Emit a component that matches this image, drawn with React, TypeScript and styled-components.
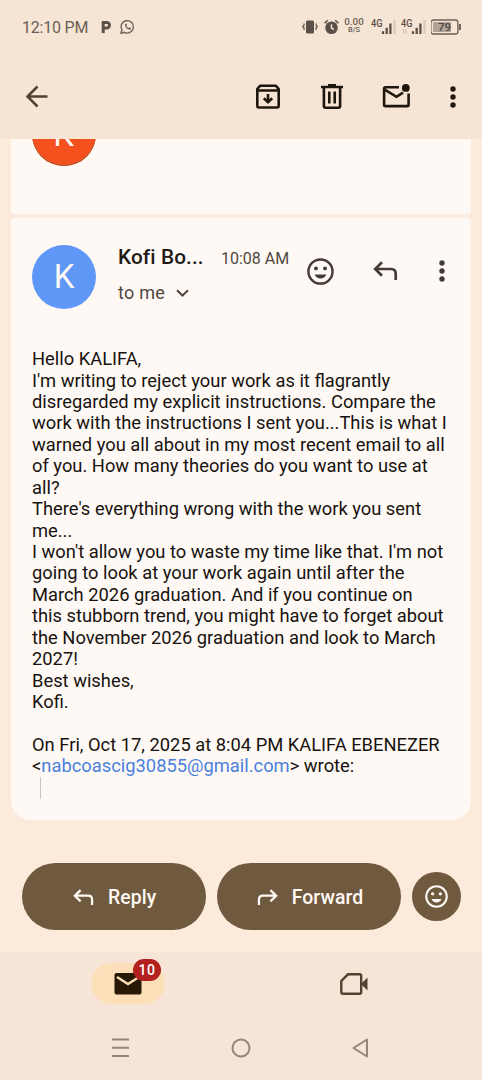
import React from "react";
import styled, { createGlobalStyle } from "styled-components";

const GlobalStyle = createGlobalStyle`
  * { box-sizing: border-box; }
  body { margin: 0; background: #fceada; font-family: Roboto, "Liberation Sans", sans-serif; }
  svg { display: block; flex: none; }
`;

const Screen = styled.div`
  width: 482px;
  height: 1080px;
  display: flex;
  flex-direction: column;
  overflow: hidden;
  background: #fceada;
`;

const StatusBar = styled.header`
  height: 54px;
  padding: 0 20px 0 22px;
  display: flex;
  align-items: center;
  background: #f6e5d5;
  color: #6b5f55;
`;

const Clock = styled.span`
  font-size: 16px;
  line-height: 20px;
  letter-spacing: -0.2px;
  width: 79px;
  padding-top: 1px;
  white-space: nowrap;
`;

const StatusIcons = styled.div`
  margin-left: auto;
  display: flex;
  align-items: center;
`;

const NetSpeed = styled.div`
  width: 20px;
  margin: 0 7px 3px 3px;
  display: flex;
  flex-direction: column;
  align-items: center;
  font-size: 9.8px;
  line-height: 9px;
  font-weight: 500;
  white-space: nowrap;
`;

const SpeedUnit = styled.span`
  font-size: 7.5px;
  line-height: 8px;
`;

const Toolbar = styled.nav`
  height: 85px;
  padding: 0 13.5px 0 21px;
  display: flex;
  align-items: center;
  background: #f6e5d5;
`;

const ToolbarActions = styled.div`
  margin-left: auto;
  display: flex;
  gap: 32px;
`;

const IconButton = styled.button<{ $color?: string }>`
  width: 32px;
  height: 32px;
  padding: 0;
  border: 0;
  background: none;
  color: ${(p) => p.$color ?? "#1f170d"};
  display: flex;
  align-items: center;
  justify-content: center;
`;

const OverflowButton = styled(IconButton)`
  margin-left: 24.5px;
`;

const ReplyIconButton = styled(IconButton)`
  margin-left: 33px;
`;

const Thread = styled.main`
  height: 681px;
  padding: 0 11px;
  display: flex;
  flex-direction: column;
  gap: 4px;
`;

const CollapsedCard = styled.section`
  height: 75px;
  padding-left: 21px;
  background: #fff9f5;
  border-radius: 0 0 4px 4px;
  box-shadow: 0 4px 0 #fbebe3;
  overflow: hidden;
`;

const MessageCard = styled.section`
  height: 602px;
  padding: 26.5px 13px 0 21px;
  background: #fff9f5;
  border-radius: 4px 4px 20px 20px;
`;

const Avatar = styled.div<{ $color: string; $lift?: number }>`
  width: 64px;
  height: 64px;
  margin-top: ${(p) => -(p.$lift ?? 0)}px;
  border-radius: 50%;
  background: ${(p) => p.$color};
  color: #fff9f5;
  display: flex;
  align-items: center;
  justify-content: center;
  font-size: 33px;
  flex: none;
`;

const RingedAvatar = styled(Avatar)`
  box-shadow: inset 0 -1px 0 #a8532f;
  padding-right: 1px;
`;

const MessageHeader = styled.div`
  height: 64px;
  display: flex;
`;

const SenderBlock = styled.div`
  width: 187.5px;
  margin-left: 22px;
`;

const SenderLine = styled.div`
  height: 25px;
  display: flex;
  align-items: baseline;
  white-space: nowrap;
`;

const Sender = styled.span`
  width: 103px;
  font-size: 20.8px;
  line-height: 25px;
  font-weight: 500;
  letter-spacing: 0.1px;
  color: #211a14;
`;

const Time = styled.span`
  font-size: 16px;
  color: #51473f;
`;

const Recipient = styled.div`
  height: 24px;
  margin-top: 11px;
  display: flex;
  align-items: center;
  gap: 11px;
  font-size: 18px;
  letter-spacing: 0.25px;
  color: #51473f;
`;

const MessageActions = styled.div`
  height: 53px;
  display: flex;
  align-items: center;
`;

const MessageBody = styled.div`
  margin-top: 39.6px;
  font-size: 18.33px;
  line-height: 21.45px;
  color: #17130f;
`;

const Line = styled.div`
  height: 21.45px;
  white-space: nowrap;
`;

const MailLink = styled.a`
  color: #4a80dc;
`;

const QuoteBar = styled.div`
  width: 1px;
  height: 22px;
  margin-left: 8px;
  background: #ccc7c3;
`;

const ReplyBar = styled.div`
  height: 132px;
  padding: 43px 21px 0 21.5px;
  display: flex;
  justify-content: space-between;
`;

const PillButton = styled.button`
  width: 184.5px;
  height: 67px;
  padding: 1px 0 0 2px;
  border: 0;
  border-radius: 34px;
  background: #705a3f;
  color: #fff9f5;
  display: flex;
  align-items: center;
  justify-content: center;
  gap: 14px;
  font: 500 19.4px Roboto, sans-serif;
  letter-spacing: 0.1px;
`;

const ReactButton = styled(PillButton)`
  width: 49px;
  height: 49px;
  margin-top: 9px;
  padding: 0;
`;

const BottomTabs = styled.nav`
  height: 64px;
  padding: 11px 91px 0 91px;
  display: flex;
  justify-content: space-between;
  background: #f6e5d7;
`;

const Tab = styled.div<{ $active?: boolean }>`
  position: relative;
  width: 74px;
  height: 41px;
  border-radius: 21px;
  background: ${(p) => (p.$active ? "#fcdfb9" : "transparent")};
  display: flex;
  align-items: center;
  justify-content: center;
`;

const Badge = styled.span`
  position: absolute;
  left: 42px;
  top: -4px;
  width: 28px;
  height: 22px;
  border-radius: 11px;
  background: #b3211f;
  color: #fff;
  font-size: 14px;
  font-weight: 500;
  letter-spacing: 0.5px;
  line-height: 22px;
  text-align: center;
`;

const SystemNav = styled.footer`
  height: 64px;
  padding: 0 110px 0 109px;
  display: flex;
  align-items: center;
  justify-content: space-between;
  background: #f6e5d7;
`;

const FlippedSvg = styled.svg<{ $flip?: boolean }>`
  transform: ${(p) => (p.$flip ? "scaleX(-1)" : "none")};
`;

const Signal = ({ arrows }: { arrows?: boolean }) => (
  <svg width="30" height="20" viewBox="0 0 30 20">
    <text x="0" y="9.5" fontSize="10" fontWeight="500" fill="#5b5048" textLength="11.5" lengthAdjust="spacingAndGlyphs">4G</text>
    {arrows && <path d="M2.500 12v5m0-5-1 1.200M5 12v5m0 0 1-1.200" stroke="#c9b9aa" strokeWidth=".9" fill="none" />}
    <path d="M12 14.200v2.800M15.700 10.700V17M19.400 6.500V17" stroke="#5b5048" strokeWidth="2.300" />
    <path d="M23.500 3v14" stroke="#d9c9ba" strokeWidth="2.200" />
  </svg>
);

const Smile = ({ size }: { size: number }) => (
  <svg width={size} height={size} viewBox="0 0 28 28">
    <circle cx="14" cy="14" r="12.500" fill="none" stroke="currentColor" strokeWidth="2.500" />
    <circle cx="9.300" cy="10.800" r="2" fill="currentColor" />
    <circle cx="18.700" cy="10.800" r="2" fill="currentColor" />
    <path d="M8 17h12c-.9 2.800-3.200 4.200-6 4.200s-5.100-1.400-6-4.200z" fill="currentColor" />
  </svg>
);

const Arrow = ({ width, flip }: { width: number; flip?: boolean }) => (
  <FlippedSvg $flip={flip} width={width} height={width * 0.8} viewBox="0 0 25 20">
    <path d="M9 1.300 2.200 8 9 14.700M2.500 8H18Q22.700 8 22.700 12.700V19" fill="none" stroke="currentColor" strokeWidth="2.700" />
  </FlippedSvg>
);

const Dots = () => (
  <svg width="6" height="22" viewBox="0 0 6 22" fill="currentColor">
    <circle cx="3" cy="3" r="2.700" />
    <circle cx="3" cy="11" r="2.700" />
    <circle cx="3" cy="19" r="2.700" />
  </svg>
);

const lines = [
  "Hello KALIFA,",
  "I'm writing to reject your work as it flagrantly",
  "disregarded my explicit instructions. Compare the",
  "work with the instructions I sent you...This is what I",
  "warned you all about in my most recent email to all",
  "of you. How many theories do you want to use at",
  "all?",
  "There's everything wrong with the work you sent",
  "me...",
  "I won't allow you to waste my time like that. I'm not",
  "going to look at your work again until after the",
  "March 2026 graduation. And if you continue on",
  "this stubborn trend, you might have to forget about",
  "the November 2026 graduation and look to March",
  "2027!",
  "Best wishes,",
  "Kofi.",
  "",
  "On Fri, Oct 17, 2025 at 8:04 PM KALIFA EBENEZER",
];

export default function App() {
  return (
    <Screen>
      <GlobalStyle />
      <StatusBar>
        <Clock>12:10 PM</Clock>
        <svg width="34" height="16" viewBox="0 0 34 16">
          <path d="M2.200 14V3.600h3.600a2.700 2.700 0 0 1 0 5.400H2.500" fill="none" stroke="#5b5048" strokeWidth="3" />
          <path d="M20 14.300l.9-3.300a6.200 6.200 0 1 1 2.400 2.300z" fill="none" stroke="#6b5f55" strokeWidth="1.400" />
          <path d="M24.100 5.200c-.4 3 2.600 6 5.600 5.400l.3-1.500-1.800-.9-.9.800c-.9-.4-1.500-1-1.900-1.900l.7-.9-.7-1.600z" fill="#6b5f55" />
        </svg>
        <StatusIcons>
          <svg width="40" height="18" viewBox="0 0 40 18">
            <rect x="5" y="2.500" width="8" height="13" rx="1.500" fill="#5b5048" />
            <path d="M3 5.500v1.800l-1.200 1.200L3 10v2M15.100 5.500v1.800l1.200 1.200-1.200 1.500v2" fill="none" stroke="#6b5f55" strokeWidth="1.400" />
            <circle cx="30.500" cy="9.800" r="6.300" fill="#5b5048" />
            <path d="M23.500 5.200l3.300-2.800M37.500 5.200l-3.300-2.800" stroke="#6b5f55" strokeWidth="1.700" />
            <path d="M30.500 6.300v3.800l2.500 1.500" fill="none" stroke="#f6e5d5" strokeWidth="1.500" />
          </svg>
          <NetSpeed>0.00<SpeedUnit>B/S</SpeedUnit></NetSpeed>
          <Signal />
          <Signal arrows />
          <svg width="31" height="18" viewBox="0 0 31 18">
            <rect x="-.1" y="2" width="27" height="14" rx="2.500" fill="none" stroke="#6b5f55" strokeWidth="1.300" />
            <rect x="2" y="4" width="18" height="10" fill="#b0a296" />
            <path d="M28.900 6v6" stroke="#6b5f55" strokeWidth="2" />
            <text x="7" y="13.300" fontSize="11.500" fontWeight="500" fill="#51473f">79</text>
          </svg>
        </StatusIcons>
      </StatusBar>

      <Toolbar>
        <IconButton aria-label="Back" $color="#51412e">
          <svg width="24" height="24" viewBox="0 0 24 24" fill="none" stroke="currentColor" strokeWidth="2.500">
            <path d="M12.500 1.500 2.500 11.500 12.500 21.500M2.500 11.500H22.500" />
          </svg>
        </IconButton>
        <ToolbarActions>
          <IconButton aria-label="Archive">
            <svg width="24" height="26" viewBox="0 0 24 26" fill="none" stroke="currentColor" strokeWidth="2.600" strokeLinejoin="round">
              <path d="M1.300 5 4 1.800h16L22.700 5v17q0 1.500-1.500 1.500H2.800q-1.500 0-1.500-1.500zM1.300 6.500h21.400" />
              <path d="M12 10v8M7.800 14.200 12 18.300l4.200-4.100" strokeLinejoin="miter" />
            </svg>
          </IconButton>
          <IconButton aria-label="Delete">
            <svg width="22" height="26" viewBox="0 0 22 26" fill="none" stroke="currentColor" strokeWidth="2.600">
              <path d="M0 3h22M7 1.300h8M2.900 3v19q0 1.700 1.700 1.700h12.800q1.700 0 1.700-1.700v-19M8.300 7.500v12M13.700 7.500v12" />
            </svg>
          </IconButton>
          <IconButton aria-label="Mark as unread">
            <svg width="28" height="26" viewBox="0 0 28 26" fill="none" stroke="currentColor" strokeWidth="2.600">
              <path d="M17 3.300H3.500q-1.400 0-1.400 1.400v16q0 1.400 1.400 1.400h21.700q1.400 0 1.400-1.400V9.500" />
              <path d="M2.300 5.300 14.500 12.800 21 8.700" />
              <circle cx="23.800" cy="3.900" r="3.900" fill="currentColor" stroke="none" />
            </svg>
          </IconButton>
        </ToolbarActions>
        <OverflowButton aria-label="More"><Dots /></OverflowButton>
      </Toolbar>

      <Thread>
        <CollapsedCard>
          <RingedAvatar $color="#f5511e" $lift={37}>K</RingedAvatar>
        </CollapsedCard>
        <MessageCard>
          <MessageHeader>
            <Avatar $color="#5e97f6">K</Avatar>
            <SenderBlock>
              <SenderLine>
                <Sender>Kofi Bo...</Sender>
                <Time>10:08 AM</Time>
              </SenderLine>
              <Recipient>
                to me
                <svg width="13" height="8" viewBox="0 0 13 8"><path d="M1 1.200l5.500 5.300L12 1.200" fill="none" stroke="currentColor" strokeWidth="2" /></svg>
              </Recipient>
            </SenderBlock>
            <MessageActions>
              <IconButton $color="#433b36" aria-label="React"><Smile size={27} /></IconButton>
              <ReplyIconButton $color="#433b36" aria-label="Reply"><Arrow width={25} /></ReplyIconButton>
              <OverflowButton $color="#433b36" aria-label="More"><Dots /></OverflowButton>
            </MessageActions>
          </MessageHeader>
          <MessageBody>
            {lines.map((text, i) => (
              <Line key={i}>{text}</Line>
            ))}
            <Line>&lt;<MailLink>nabcoascig30855@gmail.com</MailLink>&gt; wrote:</Line>
            <QuoteBar />
          </MessageBody>
        </MessageCard>
      </Thread>

      <ReplyBar>
        <PillButton><Arrow width={21} />Reply</PillButton>
        <PillButton><Arrow width={21} flip />Forward</PillButton>
        <ReactButton aria-label="React"><Smile size={23} /></ReactButton>
      </ReplyBar>

      <BottomTabs>
        <Tab $active>
          <svg width="28" height="22" viewBox="0 0 28 22">
            <rect x=".5" y="0" width="27" height="21.500" rx="2" fill="#271904" />
            <path d="M3 4l11 7 11-7" fill="none" stroke="#fcdfb9" strokeWidth="2.400" />
          </svg>
          <Badge>10</Badge>
        </Tab>
        <Tab>
          <svg width="28" height="22" viewBox="0 0 28 22">
            <path d="M8 1.300h11.500q1.700 0 1.700 1.700v16q0 1.700-1.700 1.700H3q-1.700 0-1.700-1.700V8z" fill="none" stroke="#51412e" strokeWidth="2.400" />
            <path d="M21 11l6.500-6.500v13z" fill="#51412e" />
          </svg>
        </Tab>
      </BottomTabs>

      <SystemNav>
        <svg width="22" height="20" viewBox="0 0 22 20"><path d="M3 1.500h17M3 9.800h17M3 18h17" stroke="#91867e" strokeWidth="2" /></svg>
        <svg width="20" height="20" viewBox="0 0 20 20"><circle cx="10" cy="10" r="8.500" fill="none" stroke="#91867e" strokeWidth="2" /></svg>
        <svg width="22" height="20" viewBox="0 0 22 20"><path d="M17 1.500v17L3.500 10z" fill="none" stroke="#91867e" strokeWidth="2" strokeLinejoin="round" /></svg>
      </SystemNav>
    </Screen>
  );
}
